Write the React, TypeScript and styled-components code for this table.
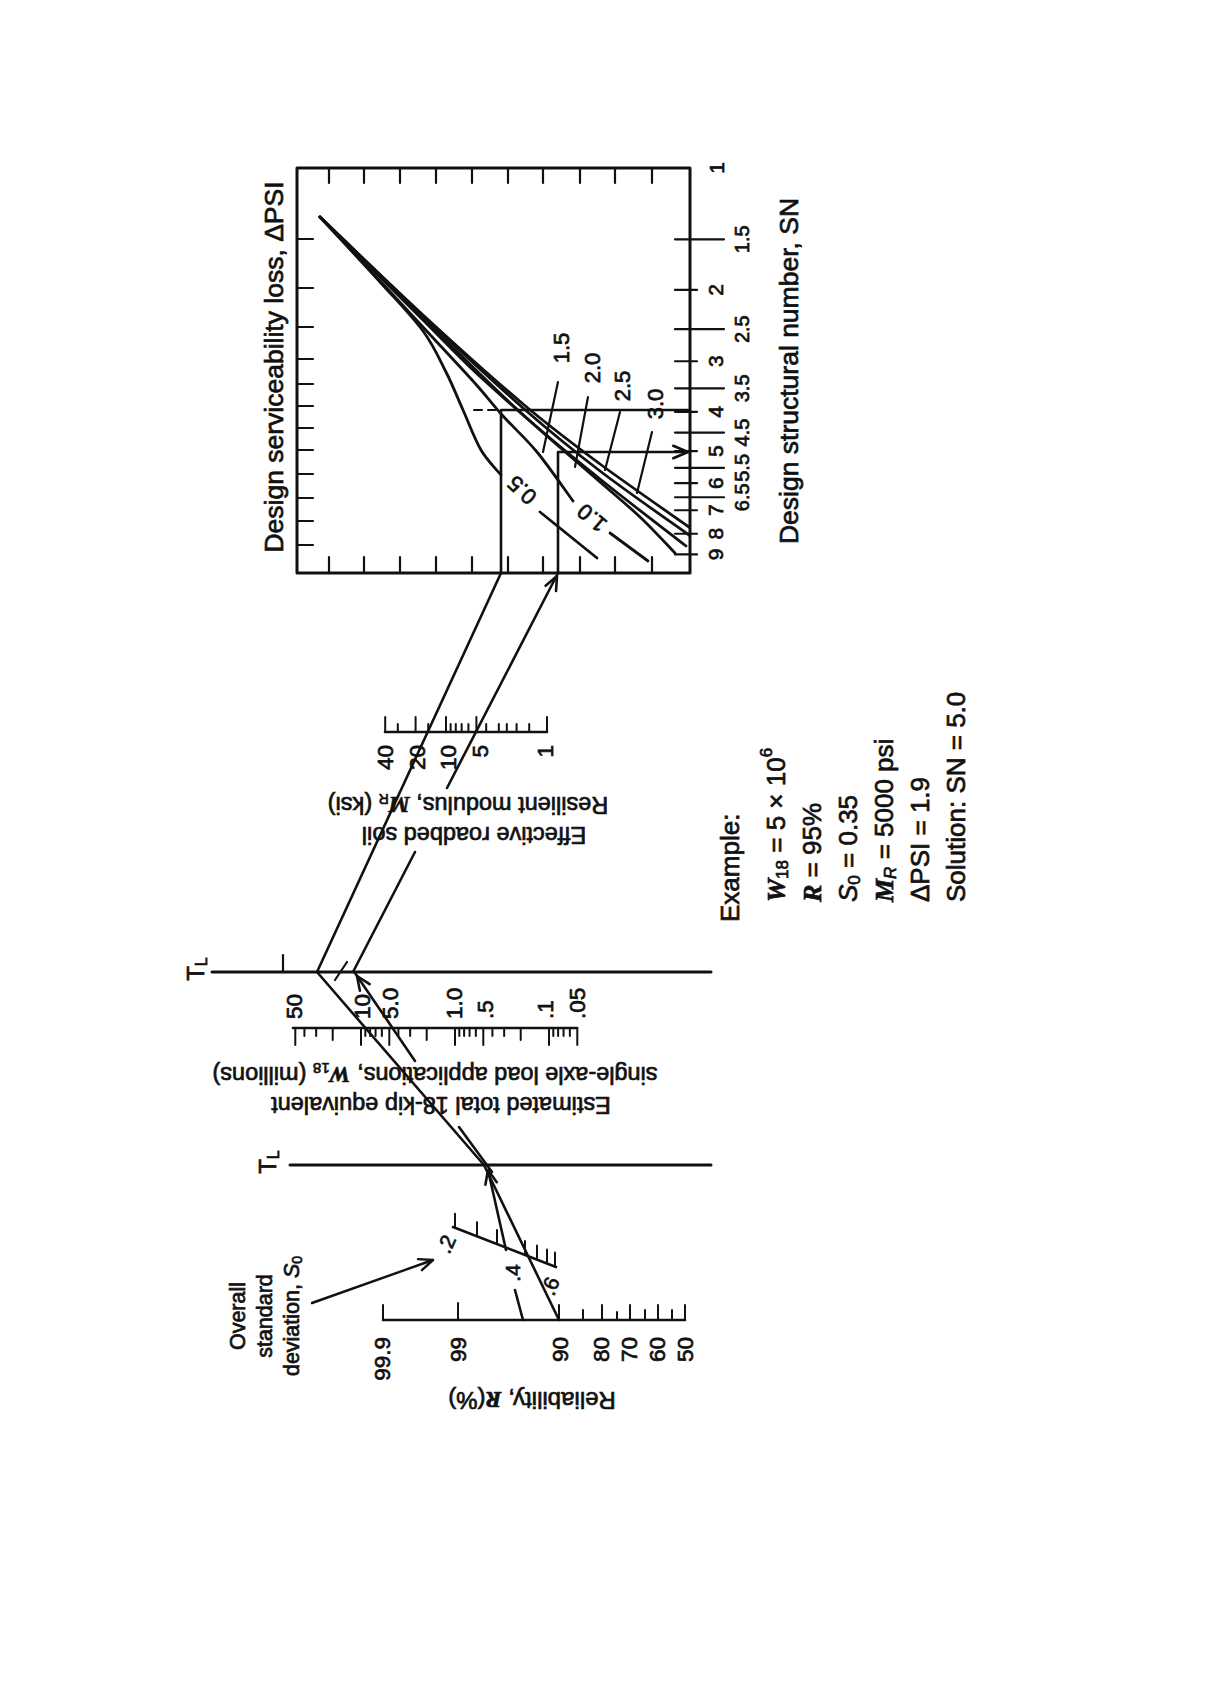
import React from "react";
import styled, { createGlobalStyle } from "styled-components";

const GlobalStyle = createGlobalStyle`
  html, body {
    margin: 0;
    padding: 0;
    background: #fff;
  }
`;

const Page = styled.div`
  width: 1225px;
  height: 1685px;
  background: #fff;
  overflow: hidden;
`;

const Chart = styled.svg`
  display: block;
`;

const Ink = styled.path<{ $w?: number; $dash?: string }>`
  fill: none;
  stroke: #111;
  stroke-width: ${(p) => p.$w ?? 2.6};
  stroke-linecap: round;
  stroke-linejoin: round;
  ${(p) => (p.$dash ? `stroke-dasharray: ${p.$dash};` : "")}
`;

const Label = styled.text<{ $size: number }>`
  font-family: "Liberation Sans", Arial, Helvetica, sans-serif;
  font-size: ${(p) => p.$size}px;
  fill: #111;
  stroke: #111;
  stroke-width: 0.7px;
`;

const Sym = styled.tspan`
  font-family: "Liberation Serif", "Times New Roman", serif;
  font-style: italic;
  font-weight: bold;
`;

const Ital = styled.tspan`
  font-style: italic;
`;

type Pt = [number, number];

const SN = (s: number) => 168 + 405 * Math.log10(s);
const WX = (w: number) => 455 - 94 * Math.log10(w);
const MX = (m: number) => 547 - 101 * Math.log10(m);

const seg = (pts: Pt[]) => "M" + pts.map((p) => p.join(",")).join(" L");

const smooth = (pts: Pt[]) => {
  let d = `M${pts[0][0]},${pts[0][1]}`;
  for (let i = 0; i < pts.length - 1; i++) {
    const p0 = pts[i - 1] ?? pts[i];
    const p1 = pts[i];
    const p2 = pts[i + 1];
    const p3 = pts[i + 2] ?? p2;
    const c1 = [p1[0] + (p2[0] - p0[0]) / 6, p1[1] + (p2[1] - p0[1]) / 6];
    const c2 = [p2[0] - (p3[0] - p1[0]) / 6, p2[1] - (p3[1] - p1[1]) / 6];
    d += ` C${c1.join(",")} ${c2.join(",")} ${p2.join(",")}`;
  }
  return d;
};

// open chevron arrow head at tip, pointing away from "from"
const head = (tip: Pt, from: Pt, len = 15, spread = 0.38) => {
  const a = Math.atan2(tip[1] - from[1], tip[0] - from[0]);
  const b1: Pt = [tip[0] - len * Math.cos(a - spread), tip[1] - len * Math.sin(a - spread)];
  const b2: Pt = [tip[0] - len * Math.cos(a + spread), tip[1] - len * Math.sin(a + spread)];
  return seg([b1, tip, b2]);
};

type RotProps = {
  x: number;
  y: number;
  a: number;
  size: number;
  anchor?: "start" | "middle" | "end";
  children: React.ReactNode;
};

const Rot = ({ x, y, a, size, anchor = "middle", children }: RotProps) => (
  <Label
    $size={size}
    x={x}
    y={y}
    textAnchor={anchor}
    dominantBaseline="central"
    transform={`rotate(${a} ${x} ${y})`}
  >
    {children}
  </Label>
);

const topTicks = [329, 364, 400, 436, 472, 508, 543, 580, 615, 652];
const leftTicks = [239, 288, 327, 359, 384, 406, 428, 450, 474, 498, 521, 545];

const curves: { pts: Pt[]; tail?: Pt[] }[] = [
  { pts: [[320, 217], [423, 315], [523, 404], [600, 464], [689, 527]] },
  { pts: [[320, 217], [423, 316], [523, 408], [600, 471], [689, 535]] },
  { pts: [[320, 217], [423, 318], [520, 412], [600, 479], [686, 546]] },
  { pts: [[320, 217], [423, 320], [473, 370], [540, 430], [600, 482], [640, 517], [675, 553]] },
  {
    pts: [[320, 217], [380, 281], [422, 326], [473, 381], [503, 416], [537, 452], [573, 501]],
    tail: [[610, 533], [648, 561]],
  },
  {
    pts: [[320, 217], [380, 282], [423, 331], [446, 372], [463, 410], [481, 450], [501, 475]],
    tail: [[540, 512], [597, 558]],
  },
];

const wTicks = [
  0.05, 0.06, 0.07, 0.08, 0.09, 0.1, 0.2, 0.3, 0.4, 0.5, 0.6, 0.7, 0.8, 0.9, 1, 2, 3, 4, 5,
  6, 7, 8, 9, 10, 20, 30, 40, 50,
];
const wLong = [0.05, 0.1, 0.5, 1, 5, 10, 50];
const wMid = [0.2, 2, 20];

const mTicks = [1, 1.5, 2, 2.5, 3, 4, 5, 6, 7, 8, 9, 10, 15, 20, 30, 40];
const mLong = [1, 5, 10, 20, 40];

const rTicks: [number, number][] = [
  [383, 15], [458, 17], [559, 15], [583, 10], [602, 15], [617, 8], [630, 15],
  [645, 10], [658, 15], [672, 10], [685, 15],
];
const rLabels: [string, number][] = [
  ["99.9", 382], ["99", 458], ["90", 560], ["80", 601], ["70", 629], ["60", 657], ["50", 685],
];

const s0Ticks = [455, 477, 497, 525, 537, 547, 555];
const s0Y = (x: number) => 1227 + ((x - 453) * 40) / 103;

const DesignChart = () => (
  <g>
    <Ink $w={3} d="M297,168 H690 V573 H297 Z" />
    {topTicks.map((x) => (
      <Ink key={`t${x}`} $w={2.2} d={`M${x},168 V183 M${x},573 V557`} />
    ))}
    {leftTicks.map((y) => (
      <Ink key={`l${y}`} $w={2.2} d={`M297,${y} H313`} />
    ))}
    {[2, 3, 4, 5, 6, 7, 8, 9].map((s) => (
      <Ink key={`i${s}`} $w={2.2} d={`M675,${SN(s)} H697`} />
    ))}
    {[1.5, 2.5, 3.5, 4.5, 5.5, 6.5].map((s) => (
      <Ink key={`h${s}`} $w={2.2} d={`M675,${SN(s)} H724`} />
    ))}
    <Rot x={716} y={168} a={-90} size={21}>1</Rot>
    {[2, 3, 4, 5, 6, 7, 8, 9].map((s) => (
      <Rot key={`il${s}`} x={716} y={SN(s)} a={-90} size={21}>
        {s}
      </Rot>
    ))}
    {[1.5, 2.5, 3.5, 4.5, 5.5, 6.5].map((s) => (
      <Rot key={`hl${s}`} x={742} y={SN(s)} a={-90} size={20}>
        {s}
      </Rot>
    ))}

    {curves.map((c, i) => (
      <g key={`c${i}`}>
        <Ink $w={2.8} d={smooth(c.pts)} />
        {c.tail && <Ink $w={2.8} d={seg(c.tail)} />}
      </g>
    ))}

    <Rot x={522} y={490} a={-137} size={22}>0.5</Rot>
    <Rot x={592} y={518} a={-140} size={22}>1.0</Rot>
    <Rot x={561} y={348} a={-90} size={22}>1.5</Rot>
    <Rot x={592} y={368} a={-90} size={22}>2.0</Rot>
    <Rot x={622} y={386} a={-90} size={22}>2.5</Rot>
    <Rot x={655} y={404} a={-90} size={22}>3.0</Rot>
    <Ink $w={2.2} d="M558,382 L543,452 M588,397 L575,467 M620,412 L605,470 M652,432 L637,493" />

    <Ink $w={2.6} d="M501,573 V410 H690" />
    <Ink $w={2} $dash="8 6" d="M474,410 H496" />
    <Ink $w={2.6} d="M558,573 V452 H688" />
    <Ink $w={2.6} d={head([688, 452], [650, 452], 16, 0.4)} />

    <Rot x={274} y={367} a={-90} size={26.5}>
      Design serviceability loss, ΔPSI
    </Rot>
    <Rot x={789} y={371} a={-90} size={26.5}>
      Design structural number, SN
    </Rot>
  </g>
);

const Scales = () => (
  <g>
    {/* turning lines */}
    <Ink $w={3} d="M212,972 H711" />
    <Ink $w={2.2} d="M283,955 V972" />
    <Ink $w={2.2} d="M335,980 L347,962" />
    <Ink $w={3} d="M290,1165 H711" />
    <Rot x={195} y={969} a={-90} size={24}>
      T<tspan dy={6} fontSize={16}>L</tspan>
    </Rot>
    <Rot x={267} y={1162} a={-90} size={24}>
      T<tspan dy={6} fontSize={16}>L</tspan>
    </Rot>

    {/* resilient modulus scale */}
    <Ink $w={2.6} d="M385,732 H547" />
    {mTicks.map((m) => (
      <Ink
        key={`m${m}`}
        $w={2}
        d={`M${MX(m)},732 V${mLong.includes(m) ? 717 : 724}`}
      />
    ))}
    {(
      [
        ["40", 385],
        ["20", 417],
        ["10", 448],
        ["5", 480],
        ["1", 545],
      ] as [string, number][]
    ).map(([t, x]) => (
      <Rot key={`ml${t}`} x={x} y={745} a={-90} size={22.5} anchor="end">
        {t}
      </Rot>
    ))}
    <Rot x={468} y={805} a={180} size={23.5}>
      Resilient modulus, <Sym>M</Sym>
      <tspan dy={6} fontSize={14}>R</tspan>
      <tspan dy={-6}> (ksi)</tspan>
    </Rot>
    <Rot x={474} y={835} a={180} size={23.5}>
      Effective roadbed soil
    </Rot>

    {/* W18 scale */}
    <Ink $w={2.6} d="M293,1028 H577" />
    {wTicks.map((w) => (
      <Ink
        key={`w${w}`}
        $w={2}
        d={`M${WX(w)},1028 V${wLong.includes(w) ? 1045 : wMid.includes(w) ? 1040 : 1036}`}
      />
    ))}
    {(
      [
        ["50", 294],
        ["10", 362],
        ["5.0", 390],
        ["1.0", 454],
        [".5", 485],
        [".1", 545],
        [".05", 577],
      ] as [string, number][]
    ).map(([t, x]) => (
      <Rot key={`wl${t}`} x={x} y={1019} a={-90} size={22.5} anchor="start">
        {t}
      </Rot>
    ))}
    <Rot x={435} y={1075} a={180} size={23.5}>
      single-axle load applications, <Sym>W</Sym>
      <tspan dy={6} fontSize={15}>18</tspan>
      <tspan dy={-6}> (millions)</tspan>
    </Rot>
    <Rot x={441} y={1105} a={180} size={23.5}>
      Estimated total 18-kip equivalent
    </Rot>

    {/* standard deviation scale */}
    <Ink $w={2.6} d="M453,1227 L556,1267" />
    {s0Ticks.map((x) => (
      <Ink key={`s${x}`} $w={2} d={`M${x},${s0Y(x)} V${s0Y(x) - 14}`} />
    ))}
    <Rot x={446} y={1244} a={-66} size={21}>.2</Rot>
    <Rot x={512} y={1273} a={-90} size={21}>.4</Rot>
    <Rot x={550} y={1286} a={-68} size={21}>.6</Rot>

    {/* reliability scale */}
    <Ink $w={2.6} d="M383,1320 H685" />
    {rTicks.map(([x, l]) => (
      <Ink key={`r${x}`} $w={2} d={`M${x},1320 V${1320 - l}`} />
    ))}
    {rLabels.map(([t, x]) => (
      <Rot key={`rl${t}`} x={x} y={1337} a={-90} size={22.5} anchor="end">
        {t}
      </Rot>
    ))}
    <Rot x={532} y={1400} a={180} size={24}>
      Reliability, <Sym>R</Sym>(%)
    </Rot>

    <Rot x={238} y={1316} a={-90} size={21.5}>Overall</Rot>
    <Rot x={265} y={1316} a={-90} size={21.5}>standard</Rot>
    <Rot x={292} y={1316} a={-90} size={21.5}>
      deviation, <Ital>S</Ital>
      <tspan dy={5} fontSize={14}>0</tspan>
    </Rot>
    <Ink $w={2.4} d="M312,1303 L433,1260" />
    <Ink $w={2.4} d={head([433, 1260], [312, 1303], 15, 0.4)} />
  </g>
);

const Construction = () => (
  <g>
    {/* first trial line */}
    <Ink $w={2.6} d={seg([[501, 573], [317, 972], [484, 1165], [559, 1320]])} />
    {/* solution line through MR = 5 ksi */}
    <Ink $w={2.6} d={seg([[558, 573], [447, 788]])} />
    <Ink $w={2.6} d={seg([[415, 852], [353, 972]])} />
    <Ink $w={2.6} d={head([557, 576], [540, 610], 15, 0.4)} />
    {/* pivot to W18 */}
    <Ink $w={2.6} d={seg([[355, 973], [415, 1061]])} />
    <Ink $w={2.6} d={seg([[459, 1127], [492, 1172]])} />
    <Ink $w={2.6} d={head([357, 976], [380, 1010], 15, 0.4)} />
    {/* R = 95 %, S0 = 0.35 */}
    <Ink $w={2.6} d={seg([[488, 1170], [506, 1250]])} />
    <Ink $w={2.6} d={seg([[515, 1290], [523, 1320]])} />
    <Ink $w={2.6} d={head([488, 1170], [496, 1205], 15, 0.4)} />
  </g>
);

const Example = () => (
  <g>
    <Rot x={730} y={922} a={-90} size={26} anchor="start">
      Example:
    </Rot>
    <Rot x={776} y={902} a={-90} size={26} anchor="start">
      <Sym>W</Sym>
      <tspan dy={6} fontSize={17}>18</tspan>
      <tspan dy={-6}> = 5 × 10</tspan>
      <tspan dy={-10} fontSize={17}>6</tspan>
    </Rot>
    <Rot x={812} y={902} a={-90} size={26} anchor="start">
      <Sym>R</Sym> = 95%
    </Rot>
    <Rot x={848} y={902} a={-90} size={26} anchor="start">
      <Ital>S</Ital>
      <tspan dy={6} fontSize={17}>0</tspan>
      <tspan dy={-6}> = 0.35</tspan>
    </Rot>
    <Rot x={884} y={902} a={-90} size={26} anchor="start">
      <Sym>M</Sym>
      <tspan dy={6} fontSize={17} fontStyle="italic">R</tspan>
      <tspan dy={-6}> = 5000 psi</tspan>
    </Rot>
    <Rot x={920} y={902} a={-90} size={26} anchor="start">
      ΔPSI = 1.9
    </Rot>
    <Rot x={956} y={902} a={-90} size={26} anchor="start">
      Solution: SN = 5.0
    </Rot>
  </g>
);

export default function App() {
  return (
    <>
      <GlobalStyle />
      <Page>
        <Chart width={1225} height={1685} viewBox="0 0 1225 1685">
          <DesignChart />
          <Scales />
          <Construction />
          <Example />
        </Chart>
      </Page>
    </>
  );
}
